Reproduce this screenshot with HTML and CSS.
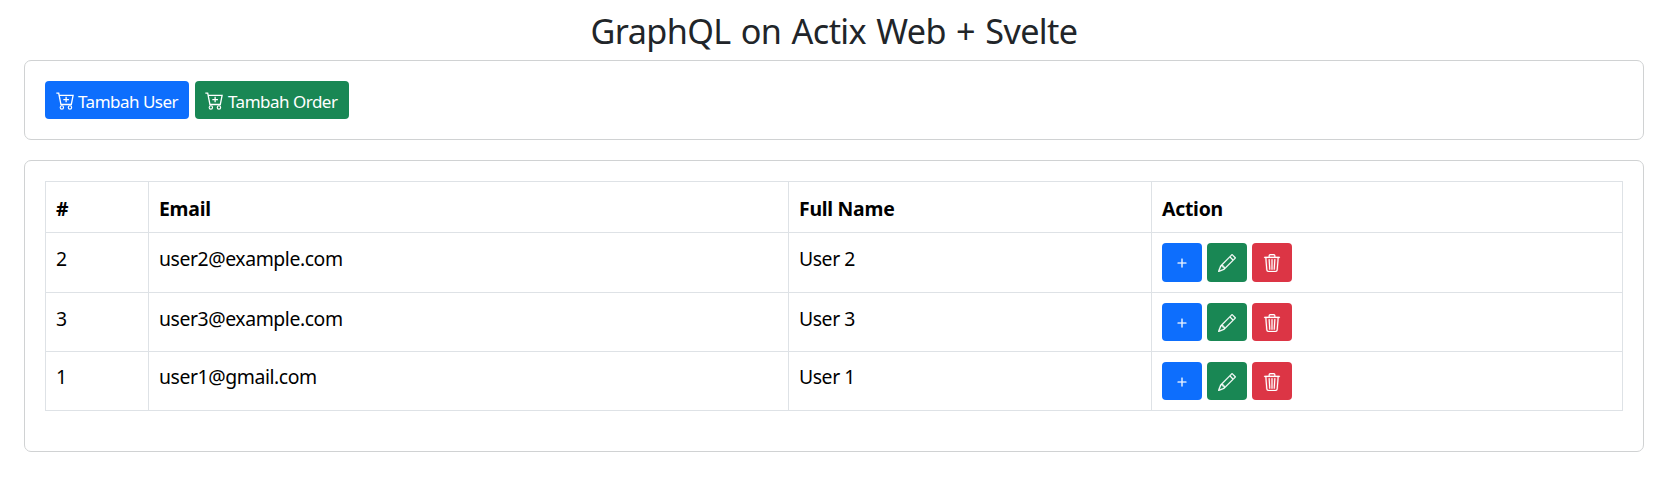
FILE: index.html
```html
<!DOCTYPE html>
<html lang="id">
<head>
<meta charset="utf-8">
<title>GraphQL on Actix Web + Svelte</title>
<link rel="stylesheet" href="styles.css">
</head>
<body>
<svg class="defs" aria-hidden="true">
  <symbol id="cart" viewBox="0 0 16 16"><path d="M.3 1h2.1L4.4 11.1H13.6L15.2 3H2.8M9 4.2v5M6.5 6.7h5" fill="none" stroke="currentColor" stroke-width="1.15"/><circle cx="5.2" cy="13.7" r="1.5" fill="none" stroke="currentColor"/><circle cx="12.4" cy="13.7" r="1.5" fill="none" stroke="currentColor"/></symbol>
  <symbol id="plus" viewBox="0 0 16 16"><path d="M8 4a.5.5 0 0 1 .5.5v3h3a.5.5 0 0 1 0 1h-3v3a.5.5 0 0 1-1 0v-3h-3a.5.5 0 0 1 0-1h3v-3A.5.5 0 0 1 8 4z"/></symbol>
  <symbol id="pencil" viewBox="0 0 16 16"><path d="M12.146.146a.5.5 0 0 1 .708 0l3 3a.5.5 0 0 1 0 .708l-10 10a.5.5 0 0 1-.168.11l-5 2a.5.5 0 0 1-.65-.65l2-5a.5.5 0 0 1 .11-.168l10-10zM11.207 2.5 13.5 4.793 14.793 3.5 12.5 1.207 11.207 2.5zm1.586 3L10.5 3.207 4 9.707V10h.5a.5.5 0 0 1 .5.5v.5h.5a.5.5 0 0 1 .5.5v.5h.293l6.5-6.5zm-9.761 5.175-.106.106-1.528 3.821 3.821-1.528.106-.106A.5.5 0 0 1 5 12.5V12h-.5a.5.5 0 0 1-.5-.5V11h-.5a.5.5 0 0 1-.468-.325z"/></symbol>
  <symbol id="trash" viewBox="0 0 16 16"><path d="M6.5 1h3a.5.5 0 0 1 .5.5v1H6v-1a.5.5 0 0 1 .5-.5ZM11 2.5v-1A1.5 1.5 0 0 0 9.5 0h-3A1.5 1.5 0 0 0 5 1.5v1H1.5a.5.5 0 0 0 0 1h.538l.853 10.66A2 2 0 0 0 4.885 16h6.23a2 2 0 0 0 1.994-1.84l.853-10.66h.538a.5.5 0 0 0 0-1H11Zm1.958 1-.846 10.58a1 1 0 0 1-.997.92h-6.23a1 1 0 0 1-.997-.92L3.042 3.5h9.916Zm-7.487 1a.5.5 0 0 1 .528.47l.5 8.5a.5.5 0 0 1-.998.06L5 5.03a.5.5 0 0 1 .47-.53Zm5.058 0a.5.5 0 0 1 .47.53l-.5 8.5a.5.5 0 1 1-.998-.06l.5-8.5a.5.5 0 0 1 .528-.47ZM8 4.5a.5.5 0 0 1 .5.5v8.5a.5.5 0 0 1-1 0V5a.5.5 0 0 1 .5-.5Z"/></symbol>
</svg>
<main class="container">
  <h1 class="title">GraphQL on Actix Web + Svelte</h1>
  <section class="card toolbar">
    <button class="btn primary"><svg class="icon"><use href="#cart"/></svg><span>Tambah User</span></button>
    <button class="btn success"><svg class="icon"><use href="#cart"/></svg><span>Tambah Order</span></button>
  </section>
  <section class="card list">
    <table class="table">
      <colgroup><col class="c-id"><col class="c-email"><col class="c-name"><col class="c-action"></colgroup>
      <thead><tr class="head"><th>#</th><th>Email</th><th>Full Name</th><th>Action</th></tr></thead>
      <tbody>
        <tr class="tall"><td>2</td><td>user2@example.com</td><td>User 2</td><td><div class="actions"><button class="btn square primary" aria-label="Tambah"><svg class="icon"><use href="#plus"/></svg></button><button class="btn square success" aria-label="Edit"><svg class="icon"><use href="#pencil"/></svg></button><button class="btn square danger" aria-label="Hapus"><svg class="icon"><use href="#trash"/></svg></button></div></td></tr>
        <tr><td>3</td><td>user3@example.com</td><td>User 3</td><td><div class="actions"><button class="btn square primary" aria-label="Tambah"><svg class="icon"><use href="#plus"/></svg></button><button class="btn square success" aria-label="Edit"><svg class="icon"><use href="#pencil"/></svg></button><button class="btn square danger" aria-label="Hapus"><svg class="icon"><use href="#trash"/></svg></button></div></td></tr>
        <tr class="last"><td>1</td><td>user1@gmail.com</td><td>User 1</td><td><div class="actions"><button class="btn square primary" aria-label="Tambah"><svg class="icon"><use href="#plus"/></svg></button><button class="btn square success" aria-label="Edit"><svg class="icon"><use href="#pencil"/></svg></button><button class="btn square danger" aria-label="Hapus"><svg class="icon"><use href="#trash"/></svg></button></div></td></tr>
      </tbody>
    </table>
  </section>
</main>
</body>
</html>
```
FILE: styles.css
```css
* { box-sizing: border-box; }
body { margin: 0; background: #fff; color: #212529; font-family: "Noto Sans", "Open Sans", sans-serif; font-size: 19.4px; }
.defs { display: none; }
.container { width: 1620px; margin-left: 24px; }
.title { margin: 0; height: 60px; padding-top: 10px; text-align: center; font-size: 34.2px; font-weight: 400; line-height: 42px; letter-spacing: -0.6px; word-spacing: 1.9px; }
.card { border: 1px solid #d0d2d3; border-radius: 7px; padding: 20px; }
.toolbar { display: flex; gap: 6px; height: 80px; margin-bottom: 20px; }
.list { height: 292px; }
.btn { display: flex; align-items: center; border: 0; border-radius: 4px; padding: 0; height: 38px; color: #fff; font-family: inherit; font-size: 17px; letter-spacing: -0.5px; white-space: nowrap; }
.toolbar .btn { width: 144px; padding: 2px 0 0 11px; gap: 4px; }
.toolbar .success { width: 154px; padding-left: 10px; gap: 5px; }
.primary { background: #0d6efd; }
.success { background: #198754; }
.danger { background: #dc3545; }
.icon { flex: none; width: 18px; height: 18px; fill: currentColor; }
.square .icon { stroke: currentColor; stroke-width: 0.2; }
.table { width: 1578px; table-layout: fixed; border-collapse: collapse; color: #000; }
.c-id { width: 103px; }
.c-email { width: 640px; }
.c-name { width: 363px; }
.c-action { width: 471px; }
.table tr { height: 59px; }
.table .head { height: 51px; }
.table .tall { height: 60px; }
.table th, .table td { border: 1px solid #dee2e6; padding: 10px; vertical-align: top; text-align: left; line-height: 30px; letter-spacing: -0.42px; }
.table td { padding-top: 11px; padding-bottom: 0; }
.table .last td { padding-top: 10px; }
.table th { padding-top: 12px; padding-bottom: 0; font-weight: 700; letter-spacing: -0.25px; }
.table td:last-child { padding-top: 10px; }
.actions { display: flex; gap: 5px; }
.square { width: 40px; justify-content: center; padding-top: 1px; }
.tall .square { height: 39px; }
```
